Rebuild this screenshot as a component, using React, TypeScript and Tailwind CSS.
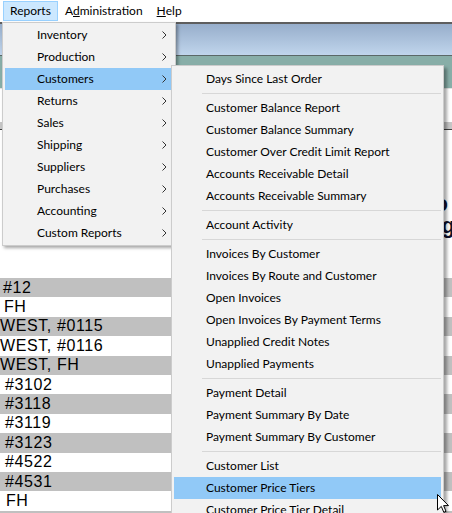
import { ChevronRight } from 'lucide-react';

const mainItems = [
  'Inventory',
  'Production',
  'Customers',
  'Returns',
  'Sales',
  'Shipping',
  'Suppliers',
  'Purchases',
  'Accounting',
  'Custom Reports',
];

// null marks a separator
const subItems: (string | null)[] = [
  'Days Since Last Order',
  null,
  'Customer Balance Report',
  'Customer Balance Summary',
  'Customer Over Credit Limit Report',
  'Accounts Receivable Detail',
  'Accounts Receivable Summary',
  null,
  'Account Activity',
  null,
  'Invoices By Customer',
  'Invoices By Route and Customer',
  'Open Invoices',
  'Open Invoices By Payment Terms',
  'Unapplied Credit Notes',
  'Unapplied Payments',
  null,
  'Payment Detail',
  'Payment Summary By Date',
  'Payment Summary By Customer',
  null,
  'Customer List',
  'Customer Price Tiers',
  'Customer Price Tier Detail',
];

const rows = [
  { text: '#12', pad: 'pl-[3px]' },
  { text: 'FH', pad: 'pl-[4px]' },
  { text: 'WEST, #0115', pad: 'pl-0' },
  { text: 'WEST, #0116', pad: 'pl-0' },
  { text: 'WEST, FH', pad: 'pl-0' },
  { text: '#3102', pad: 'pl-[5px]' },
  { text: '#3118', pad: 'pl-[5px]' },
  { text: '#3119', pad: 'pl-[5px]' },
  { text: '#3123', pad: 'pl-[5px]' },
  { text: '#4522', pad: 'pl-[5px]' },
  { text: '#4531', pad: 'pl-[5px]' },
  { text: 'FH', pad: 'pl-[6px]' },
  { text: 'W12', pad: 'pl-0' },
];

function Chevron() {
  return (
    <svg width="5" height="8" viewBox="0 0 5 8" className="shrink-0">
      <polyline points="0.5,0.5 4,4 0.5,7.5" fill="none" stroke="#333" strokeWidth="1" />
    </svg>
  );
}

export default function App() {
  return (
    <div className="relative w-[452px] h-[513px] overflow-hidden bg-white font-['Lato',sans-serif] text-[12px] text-black">
      {/* menu bar */}
      <div className="h-[22px] flex items-start pt-[1px] pl-[3px] bg-white">
        <div className="h-[20px] flex items-center px-[6px] bg-[#cce8ff] border border-[#99d1ff]">Reports</div>
        <div className="h-[20px] flex items-center px-[7px]">
          A<span className="underline">d</span>ministration
        </div>
        <div className="h-[20px] flex items-center px-[7px]">
          <span className="underline">H</span>elp
        </div>
      </div>

      {/* window behind the menus */}
      <div className="h-[2px] bg-[#5e5e5e]" />
      <div className="h-[31px] bg-gradient-to-b from-[#97aecb] to-[#c0d5ec]" />
      <div className="h-px bg-[#5b6867]" />
      <div className="h-[32px] bg-[#88aea8]" />
      <div className="h-[34px] bg-white border-t border-[#e4e4e4]" />
      <div className="h-[7px] bg-[#c6c6c6]" />
      <div className="h-px bg-[#404040]" />
      <div className="h-[148px] bg-white pt-[63px] font-['Liberation_Sans',sans-serif] font-bold text-[22px] leading-[22px] text-[#10102a]">
        <div className="text-right pr-[4px] whitespace-nowrap">Sales Histo</div>
        <div className="text-right -mr-[3px] whitespace-nowrap">
          <span className="underline decoration-2">Pricing</span>
        </div>
      </div>
      <div className="font-['Liberation_Sans',sans-serif] text-[16px] tracking-[0.6px]">
        {rows.map((r, i) => (
          <div
            key={i}
            className={`h-[19.4px] flex items-center leading-none whitespace-nowrap ${r.pad} ${
              i % 2 === 0 ? 'bg-[#c0c0c0]' : 'bg-white'
            }`}
          >
            {r.text}
          </div>
        ))}
      </div>

      {/* Reports dropdown */}
      <div className="absolute left-[2px] top-[22px] w-[174px] bg-[#f2f2f2] border border-[#cccccc] pt-[1px] pb-px pl-[2px] pr-[3px] shadow-[2px_2px_3px_rgba(0,0,0,0.35)]">
        {mainItems.map((item) => (
          <div
            key={item}
            className={`h-[22px] flex items-center justify-between pl-[32px] pr-[5px] ${
              item === 'Customers' ? 'bg-[#91c9f7]' : ''
            }`}
          >
            <span>{item}</span>
            <Chevron />
          </div>
        ))}
      </div>

      {/* Customers submenu */}
      <div className="absolute left-[171px] top-[65px] w-[273px] bg-[#f2f2f2] border border-[#cccccc] pt-[2px] px-[2px] shadow-[3px_3px_3px_rgba(0,0,0,0.35)]">
        {subItems.map((item, i) =>
          item === null ? (
            <div key={i} className="h-[7px] flex items-center pl-[28px]">
              <div className="h-px w-full bg-[#d7d7d7]" />
            </div>
          ) : (
            <div
              key={i}
              className={`h-[22px] flex items-center pl-[32px] whitespace-nowrap ${
                item === 'Customer Price Tiers' ? 'bg-[#91c9f7]' : ''
              }`}
            >
              {item}
            </div>
          )
        )}
      </div>

      {/* mouse pointer */}
      <svg className="absolute left-[437px] top-[494px]" width="12" height="20" viewBox="0 0 12 20">
        <path
          d="M0.5 0.5 L0.5 16 L4.3 12.4 L6.8 18.3 L9 17.3 L6.6 11.6 L11.5 11.6 Z"
          fill="#fff"
          stroke="#000"
          strokeWidth="1"
          strokeLinejoin="miter"
        />
      </svg>
      <span className="hidden">
        <ChevronRight />
      </span>
    </div>
  );
}
